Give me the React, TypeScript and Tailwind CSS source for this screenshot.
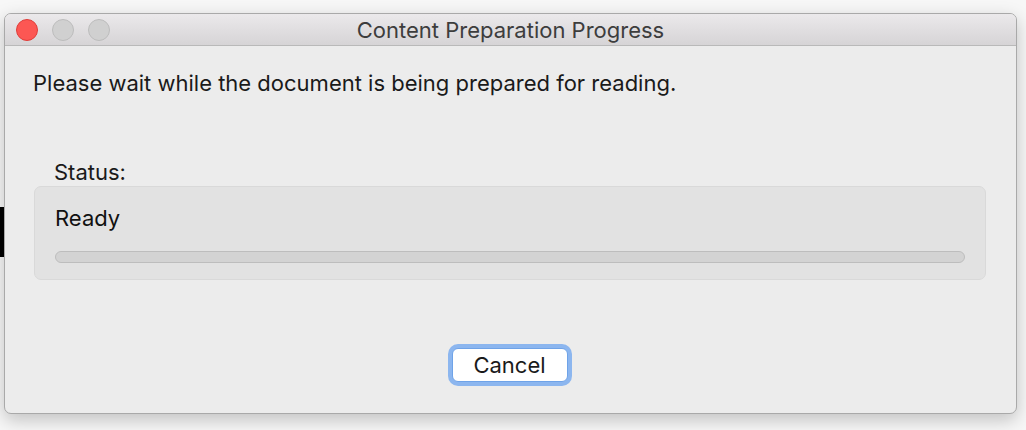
export default function App() {
    return (
        <div className="w-[1026px] h-[430px] bg-[#f7f7f7] pl-[4px] pt-[13px] relative overflow-hidden" style={{ fontFamily: "Inter, 'Liberation Sans', sans-serif" }}>
            {/* something dark behind the window */}
            <div className="absolute left-0 top-[207px] w-[4px] h-[50px] bg-black" />
            <div className="w-[1013px] h-[401px] rounded-[7px] border border-[#a9a9a9] bg-[#ececec] shadow-[0_6px_18px_rgba(0,0,0,0.22)] flex flex-col overflow-hidden">
                <div className="h-[32px] shrink-0 bg-gradient-to-b from-[#ebe9eb] to-[#d6d4d6] border-b border-[#b9b9b9] flex items-center relative">
                    <div className="flex gap-[14px] pl-[11px]">
                        <span className="w-[22px] h-[22px] rounded-full bg-[#fc5753] border border-[#df3d39]" />
                        <span className="w-[22px] h-[22px] rounded-full bg-[#d0d0d0] border border-[#bcbcbc]" />
                        <span className="w-[22px] h-[22px] rounded-full bg-[#d0d0d0] border border-[#bcbcbc]" />
                    </div>
                    <p className="absolute inset-x-0 text-center text-[22px] text-[#3d3d3d] leading-none">Content Preparation Progress</p>
                </div>
                <div className="flex flex-col px-[28px] pt-[22px]">
                    <p className="text-[22px] text-[#1a1a1a] leading-[30px]">Please wait while the document is being prepared for reading.</p>
                    <p className="text-[22px] text-[#1a1a1a] leading-[26px] mt-[61px] ml-[21px]">Status:</p>
                    <div className="ml-[1px] mt-[1px] w-[952px] h-[94px] rounded-[7px] bg-[#e2e2e2] border border-[#d9d9d9] px-[20px] pt-[16px]">
                        <p className="text-[22px] text-[#111] leading-[30px]">Ready</p>
                        <div className="mt-[18px] h-[12px] rounded-full bg-[#d3d3d3] border border-[#bdbdbd]" />
                    </div>
                    <div className="flex justify-center mt-[64px] pr-[2px]">
                        <div className="w-[124px] h-[42px] rounded-[10px] bg-[#8cb6ef] p-[4px] flex">
                            <button className="flex-1 rounded-[6px] bg-white border border-[#6fa3e8] text-[22px] text-[#1a1a1a] leading-none">Cancel</button>
                        </div>
                    </div>
                </div>
            </div>
        </div>
    )
}
